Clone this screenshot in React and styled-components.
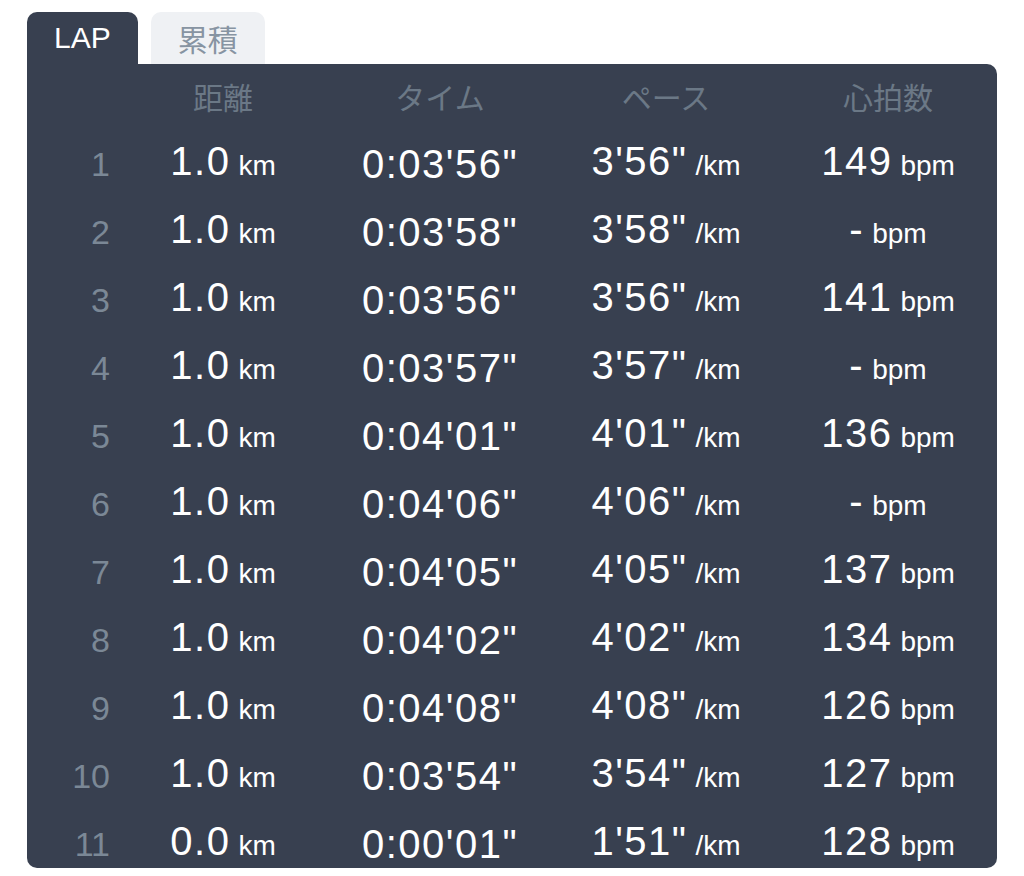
import React from 'react'
import styled, { createGlobalStyle } from 'styled-components'

const laps = [
  { dist: '1.0', time: "0:03'56\"", pace: "3'56\"", hr: '149' },
  { dist: '1.0', time: "0:03'58\"", pace: "3'58\"", hr: '-' },
  { dist: '1.0', time: "0:03'56\"", pace: "3'56\"", hr: '141' },
  { dist: '1.0', time: "0:03'57\"", pace: "3'57\"", hr: '-' },
  { dist: '1.0', time: "0:04'01\"", pace: "4'01\"", hr: '136' },
  { dist: '1.0', time: "0:04'06\"", pace: "4'06\"", hr: '-' },
  { dist: '1.0', time: "0:04'05\"", pace: "4'05\"", hr: '137' },
  { dist: '1.0', time: "0:04'02\"", pace: "4'02\"", hr: '134' },
  { dist: '1.0', time: "0:04'08\"", pace: "4'08\"", hr: '126' },
  { dist: '1.0', time: "0:03'54\"", pace: "3'54\"", hr: '127' },
  { dist: '0.0', time: "0:00'01\"", pace: "1'51\"", hr: '128' }
]

const App = () => (
  <Page>
    <GlobalStyle />
    <Tabs>
      <Tab active>LAP</Tab>
      <Tab>累積</Tab>
    </Tabs>
    <Panel>
      <HeadRow>
        <span />
        <span>距離</span>
        <span>タイム</span>
        <span>ペース</span>
        <span>心拍数</span>
      </HeadRow>
      <Body>
        {laps.map((lap, i) => (
          <Row key={i}>
            <Num>{i + 1}</Num>
            <Cell>
              {lap.dist}
              <Unit>km</Unit>
            </Cell>
            <Cell>{lap.time}</Cell>
            <Cell>
              {lap.pace}
              <Unit>/km</Unit>
            </Cell>
            <Cell>
              {lap.hr}
              <Unit>bpm</Unit>
            </Cell>
          </Row>
        ))}
      </Body>
    </Panel>
  </Page>
)

export default App

const GlobalStyle = createGlobalStyle`
  body {
    margin: 0;
    background: #ffffff;
    font-family: "Liberation Sans", "Noto Sans CJK JP", sans-serif;
  }
`

const Page = styled.div`
  width: 970px;
  padding: 12px 0 0 27px;
`

const Tabs = styled.div`
  display: flex;
  gap: 13px;
`

const Tab = styled.div`
  height: 52px;
  padding: 0 27px;
  display: flex;
  align-items: center;
  border-radius: 10px 10px 0 0;
  font-size: 30px;
  background: ${p => (p.active ? '#384050' : '#eff1f4')};
  color: ${p => (p.active ? '#ffffff' : '#8794a2')};
`

const Panel = styled.div`
  background: #384050;
  border-radius: 0 10px 10px 10px;
  padding: 17px 0 3px;
`

const Grid = styled.div`
  display: grid;
  grid-template-columns: 83px 226px 208px 244px 200px;
  align-items: center;
  text-align: center;
  white-space: nowrap;
`

const HeadRow = styled(Grid)`
  height: 36px;
  line-height: 36px;
  font-size: 30px;
  color: #6b7886;
  margin-bottom: 20px;
`

const Body = styled.div`
  display: flex;
  flex-direction: column;
  gap: 20px;
`

const Row = styled(Grid)`
  height: 48px;
  line-height: 48px;
  font-size: 40px;
  color: #ffffff;
`

const Num = styled.span`
  text-align: right;
  font-size: 34px;
  color: #7b8896;
`

const Cell = styled.span`
  letter-spacing: 1.5px;
`

const Unit = styled.span`
  font-size: 28px;
  letter-spacing: 0;
  margin-left: 8px;
`
